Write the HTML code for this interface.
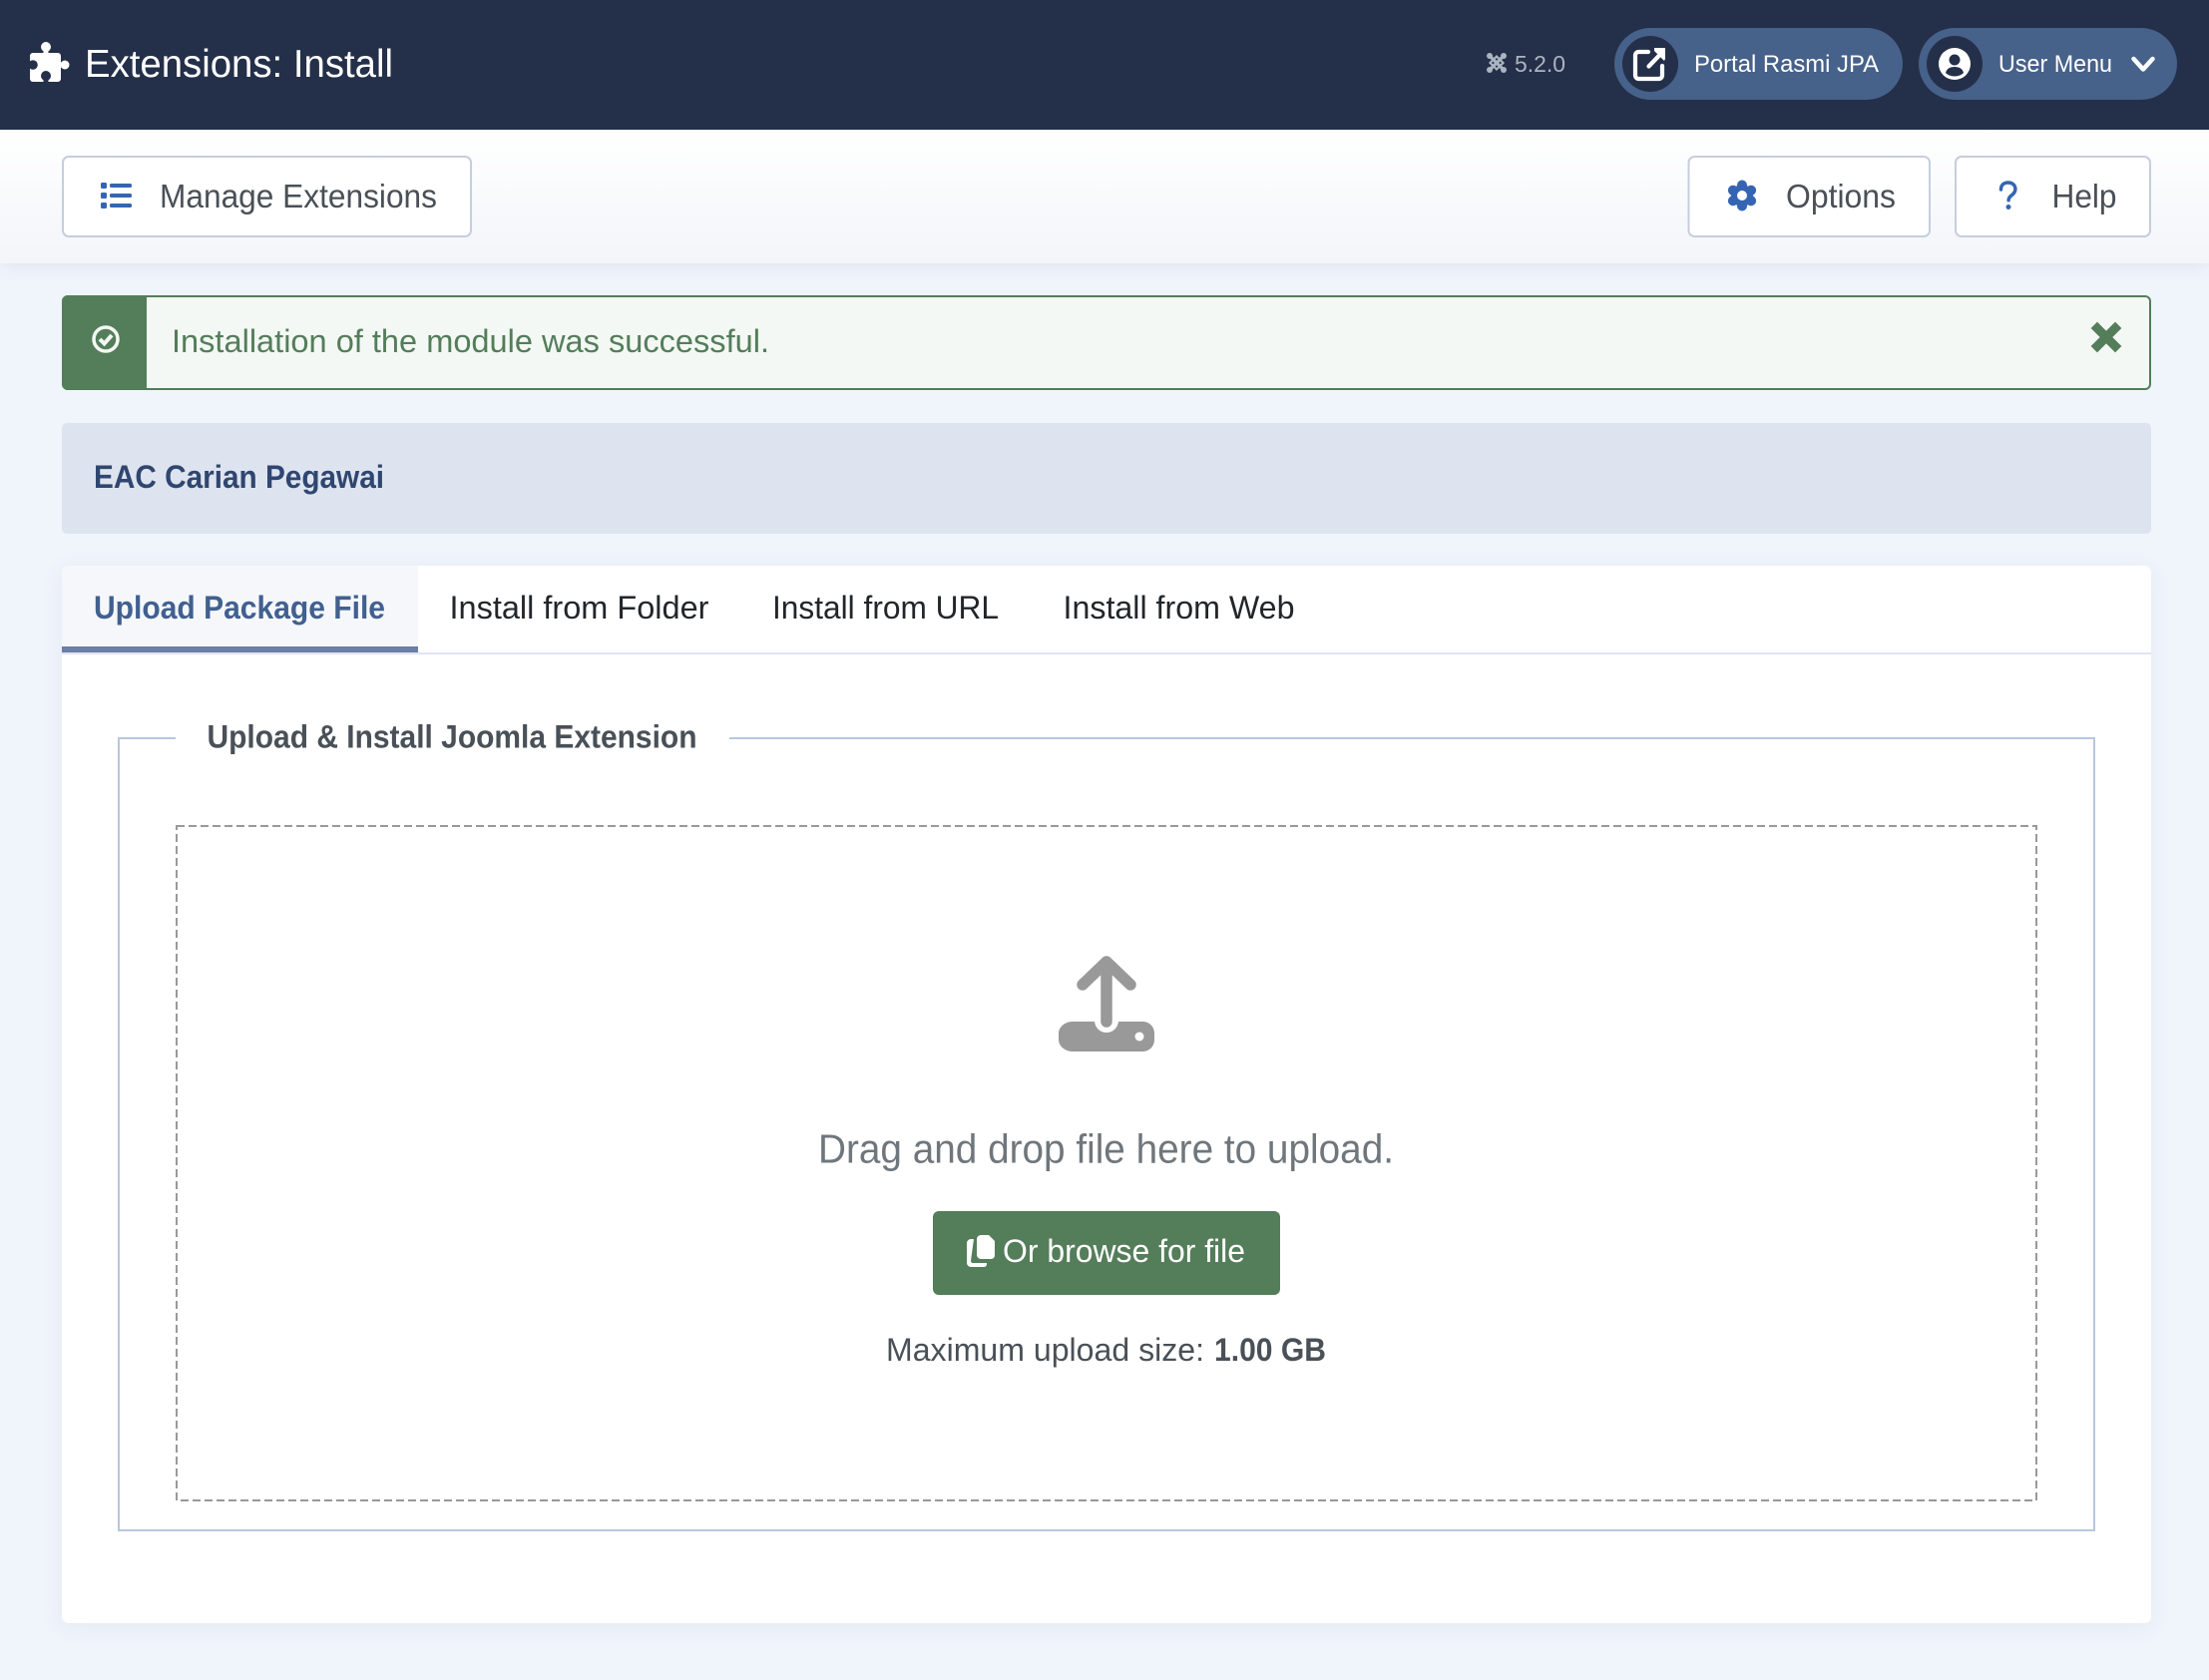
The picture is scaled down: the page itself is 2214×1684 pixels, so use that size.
<!DOCTYPE html>
<html lang="en"><head><meta charset="utf-8"><title>Extensions: Install</title>
<style>
html,body{margin:0;padding:0;background:#f0f4fb;width:2214px;height:1684px;overflow:hidden}
svg{display:block}
text{font-family:"Liberation Sans",sans-serif}
</style></head>
<body>
<svg xmlns="http://www.w3.org/2000/svg" width="2214" height="1684" viewBox="0 0 2214 1684">
<defs>
<linearGradient id="tb" x1="0" y1="0" x2="0" y2="1"><stop offset="0" stop-color="#ffffff"/><stop offset="1" stop-color="#f3f5f9"/></linearGradient>
</defs>
<rect width="2214" height="1684" fill="#f0f4fb"/>

<!-- toolbar -->
<rect x="0" y="130" width="2214" height="134" fill="url(#tb)" style="filter:drop-shadow(0 3px 8px rgba(40,60,100,.08))"/>
<!-- header -->
<rect width="2214" height="130" fill="#242f49"/>
<!-- puzzle -->
<g fill="#fff">
<rect x="30" y="53" width="31" height="29" rx="3"/>
<rect x="43.500" y="48" width="5" height="7"/>
<circle cx="46" cy="47" r="5"/>
<rect x="59" y="62.500" width="5" height="5"/>
<circle cx="65" cy="65" r="4.500"/>
</g>
<g fill="#242f49">
<circle cx="33" cy="65" r="4.800"/>
<rect x="28" y="63" width="4" height="4"/>
<circle cx="46" cy="76" r="5"/>
<rect x="43.500" y="78" width="5" height="5"/>
</g>
<text x="85" y="77" font-size="39" fill="#fff" textLength="309" lengthAdjust="spacingAndGlyphs">Extensions: Install</text>

<!-- joomla icon -->
<g fill="none" stroke="#a9b5c0" stroke-width="3.200" stroke-linecap="round">
<path d="M1493 56 1507 70M1507 56 1493 70"/>
<path d="M1500 56.500 1506.500 63 1500 69.500 1493.500 63z" stroke-width="2.200"/>
</g>
<g fill="#a9b5c0"><circle cx="1493" cy="56" r="3"/><circle cx="1507" cy="56" r="3"/><circle cx="1493" cy="70" r="3"/><circle cx="1507" cy="70" r="3"/></g>
<text x="1518" y="72" font-size="23" fill="#a9b5c0" textLength="51" lengthAdjust="spacingAndGlyphs">5.2.0</text>

<!-- pills -->
<rect x="1618" y="28" width="289" height="72" rx="36" fill="#46618a"/>
<circle cx="1654" cy="64" r="28" fill="#242f49"/>
<path d="M1652 52h-9.500a3.500 3.500 0 0 0-3.500 3.500v20a3.500 3.500 0 0 0 3.500 3.500h20a3.500 3.500 0 0 0 3.500-3.500v-9.500" fill="none" stroke="#fff" stroke-width="4.200" stroke-linecap="round" stroke-linejoin="round"/>
<path d="M1652.500 66.500 1665 53.500" fill="none" stroke="#fff" stroke-width="4.200" stroke-linecap="round"/>
<path fill="#fff" d="M1658 48h11v11l-1 2-3-3-4-4-3-3z"/>
<text x="1698" y="72" font-size="24" fill="#fff" textLength="185" lengthAdjust="spacingAndGlyphs">Portal Rasmi JPA</text>

<rect x="1923" y="28" width="259" height="72" rx="36" fill="#46618a"/>
<circle cx="1959" cy="64" r="28" fill="#242f49"/>
<circle cx="1959" cy="64" r="16" fill="#fff"/>
<circle cx="1959" cy="60" r="5.500" fill="#242f49"/>
<path d="M1950 73c1-4 4-6 9-6s8 2 9 6c-2 2-5 3.500-9 3.500s-7-1.500-9-3.500z" fill="#242f49"/>
<text x="2003" y="72" font-size="24" fill="#fff" textLength="114" lengthAdjust="spacingAndGlyphs">User Menu</text>
<path d="M2138.500 59 2148 69.500 2157.500 59" fill="none" stroke="#fff" stroke-width="4.500" stroke-linecap="round" stroke-linejoin="round"/>

<!-- toolbar buttons -->
<g fill="#fff" stroke="#c6cedd" stroke-width="2">
<rect x="63" y="157" width="409" height="80" rx="6"/>
<rect x="1692.500" y="157" width="241.500" height="80" rx="6"/>
<rect x="1960" y="157" width="195" height="80" rx="6"/>
</g>
<g fill="#3565b2">
<rect x="101" y="183" width="6" height="6" rx="1.500"/><rect x="101" y="193" width="6" height="6" rx="1.500"/><rect x="101" y="203" width="6" height="6" rx="1.500"/>
<rect x="110" y="184" width="22" height="4" rx="1.500"/><rect x="110" y="194" width="22" height="4" rx="1.500"/><rect x="110" y="204" width="22" height="4" rx="1.500"/>
</g>
<text x="160" y="208" font-size="33" fill="#495057" textLength="278" lengthAdjust="spacingAndGlyphs">Manage Extensions</text>

<!-- gear -->
<g stroke="#3565b2" stroke-width="10" stroke-linecap="round" fill="none">
<path d="M1746 185.500V206.500"/>
<path d="M1736.900 190.750 1755.100 201.250"/>
<path d="M1755.100 190.750 1736.900 201.250"/>
</g>
<circle cx="1746" cy="196" r="11" fill="#3565b2"/>
<circle cx="1746" cy="196" r="5" fill="#fff"/>
<text x="1790" y="208" font-size="33" fill="#495057" textLength="110" lengthAdjust="spacingAndGlyphs">Options</text>

<path d="M2005.500 190c0-4.500 3-7 7.200-7s7.200 2.500 7.200 6.500c0 3-1.600 4.700-3.800 6.300-2 1.500-3 2.700-3 5" fill="none" stroke="#3565b2" stroke-width="3.500" stroke-linecap="round"/>
<circle cx="2013" cy="207.500" r="2.500" fill="#3565b2"/>
<text x="2056.500" y="208" font-size="33" fill="#495057" textLength="65" lengthAdjust="spacingAndGlyphs">Help</text>

<!-- alert -->
<rect x="63" y="297" width="2092" height="93" rx="5" fill="#f3f8f4" stroke="#547d5a" stroke-width="2"/>
<path d="M68 296h79v95H68a6 6 0 0 1-6-6v-83a6 6 0 0 1 6-6z" fill="#547d5a"/>
<circle cx="106" cy="340" r="12" fill="none" stroke="#f3f8f4" stroke-width="3.500"/>
<path d="M100 340 104.500 344.500 112 336" fill="none" stroke="#f3f8f4" stroke-width="4"/>
<text x="172" y="353" font-size="32.500" fill="#547d5a" textLength="599" lengthAdjust="spacingAndGlyphs">Installation of the module was successful.</text>
<path d="M2102 329 2120 347M2120 329 2102 347" fill="none" stroke="#547d5a" stroke-width="9" stroke-linecap="square"/>

<!-- title bar -->
<rect x="62" y="424" width="2094" height="111" rx="5" fill="#dee4ef"/>
<text x="94" y="489" font-size="32.500" font-weight="700" fill="#2f4670" textLength="291" lengthAdjust="spacingAndGlyphs">EAC Carian Pegawai</text>

<!-- card -->
<rect x="62" y="567" width="2094" height="1060" rx="7" fill="#fff" style="filter:drop-shadow(0 4px 10px rgba(40,60,120,.06))"/>
<path d="M62 648V574a7 7 0 0 1 7-7H419v81z" fill="#f5f7fb"/>
<rect x="62" y="654" width="2094" height="2" fill="#dfe4f2"/>
<rect x="62" y="648" width="357" height="6" fill="#6a7fa3"/>
<text x="94" y="620" font-size="32.500" font-weight="700" fill="#41608f" textLength="292" lengthAdjust="spacingAndGlyphs">Upload Package File</text>
<text x="450.500" y="620" font-size="32.500" fill="#22262a" textLength="260" lengthAdjust="spacingAndGlyphs">Install from Folder</text>
<text x="774" y="620" font-size="32.500" fill="#22262a" textLength="227" lengthAdjust="spacingAndGlyphs">Install from URL</text>
<text x="1065.500" y="620" font-size="32.500" fill="#22262a" textLength="232" lengthAdjust="spacingAndGlyphs">Install from Web</text>

<!-- fieldset -->
<path d="M176 740H119V1534H2099V740H731" fill="none" stroke="#b8c7de" stroke-width="2"/>
<text x="207.500" y="749.500" font-size="32.500" font-weight="700" fill="#495057" textLength="491" lengthAdjust="spacingAndGlyphs">Upload &amp; Install Joomla Extension</text>

<rect x="177" y="828" width="1864" height="676" fill="none" stroke="#999" stroke-width="2" stroke-dasharray="8 4"/>

<!-- upload icon -->
<path d="M1075 1024h22c1 7 6 11 12 11s11-4 12-11h24c7 0 12 5 12 12v6c0 7-5 12-12 12h-70c-7 0-14-5-14-12v-6c0-7 7-12 14-12z" fill="#999"/>
<circle cx="1142" cy="1039" r="4.500" fill="#fff"/>
<path d="M1109 1024V965M1085 987 1109 964 1133 987" fill="none" stroke="#999" stroke-width="11.500" stroke-linecap="round" stroke-linejoin="round"/>

<text x="820" y="1165.500" font-size="40.500" fill="#6f767c" textLength="577" lengthAdjust="spacingAndGlyphs">Drag and drop file here to upload.</text>

<!-- browse button -->
<rect x="935" y="1214" width="348" height="84" rx="6" fill="#547d5a"/>
<path d="M983 1238h8l6 6v14c0 2-1 4-4 4h-10c-2 0-4-2-4-4v-16c0-2 2-4 4-4z" fill="#fff"/>
<path d="M976 1242h-3c-2 0-4 2-4 4v20c0 2 2 4 4 4h13c2 0 3-1 3-4h-14c-1 0-2-1-2-2z" fill="#fff"/>
<text x="1005" y="1265" font-size="32.500" fill="#fff" textLength="243" lengthAdjust="spacingAndGlyphs">Or browse for file</text>

<text x="888" y="1364" font-size="32" fill="#495057" textLength="319" lengthAdjust="spacingAndGlyphs">Maximum upload size:</text>
<text x="1217" y="1364" font-size="32" font-weight="700" fill="#495057" textLength="112" lengthAdjust="spacingAndGlyphs">1.00 GB</text>
</svg>
</body></html>
